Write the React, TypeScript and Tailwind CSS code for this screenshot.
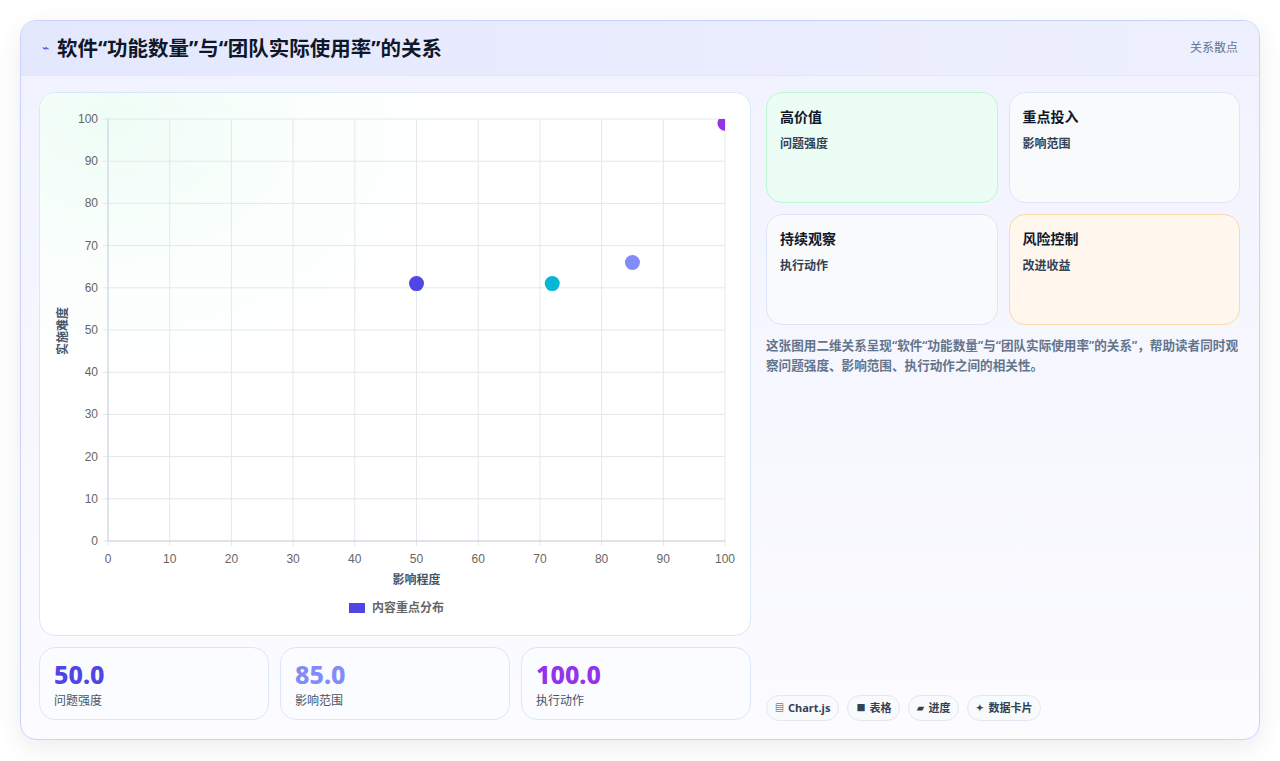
import React from "react";

const F = { fontFamily: '"Noto Sans","Noto Sans CJK SC",sans-serif' };

function Chart() {
  const x0 = 68, x1 = 685, y0 = 26, y1 = 448;
  const xs = (v: number) => x0 + ((x1 - x0) * v) / 100;
  const ys = (v: number) => y1 - ((y1 - y0) * v) / 100;
  const ticks = [0, 10, 20, 30, 40, 50, 60, 70, 80, 90, 100];
  const pts = [
    { x: 50, y: 61, c: "#4f46e5" },
    { x: 72, y: 61, c: "#06b6d4" },
    { x: 85, y: 66, c: "#818cf8" },
    { x: 100, y: 99, c: "#9333ea" },
  ];
  return (
    <svg width="710" height="542" className="block" style={{ fontFamily: '"Liberation Sans","Noto Sans CJK SC",sans-serif' }}>
      <defs>
        <radialGradient id="g" cx="0.1" cy="0.05" r="0.6">
          <stop offset="0" stopColor="#ecfdf5" stopOpacity="0.9" />
          <stop offset="1" stopColor="#ffffff" stopOpacity="0" />
        </radialGradient>
        <clipPath id="c">
          <rect x={x0} y={y0} width={x1 - x0} height={y1 - y0} />
        </clipPath>
      </defs>
      <rect width="710" height="542" fill="url(#g)" />
      {ticks.map((t) => (
        <g key={t}>
          <line x1={xs(t)} x2={xs(t)} y1={y0} y2={y1 + 5} stroke="#e5e7eb" />
          <line x1={x0 - 5} x2={x1} y1={ys(t)} y2={ys(t)} stroke="#e5e7eb" />
          <text x={x0 - 10} y={ys(t) + 4} fontSize="12" fill="#666" textAnchor="end">{t}</text>
          <text x={xs(t)} y={470} fontSize="12" fill="#666" textAnchor="middle">{t}</text>
        </g>
      ))}
      <line x1={x0} x2={x0} y1={y0} y2={y1} stroke="#cbd5e1" />
      <line x1={x0} x2={x1} y1={y1} y2={y1} stroke="#cbd5e1" />
      <text x={(x0 + x1) / 2} y={491} fontSize="12" fontWeight="700" fill="#475569" textAnchor="middle">影响程度</text>
      <text transform="translate(27,238) rotate(-90)" fontSize="12" fontWeight="700" fill="#475569" textAnchor="middle">实施难度</text>
      <rect x="309" y="510" width="16" height="10" fill="#4f46e5" />
      <text x="332" y="519" fontSize="12" fontWeight="700" fill="#666">内容重点分布</text>
      <g clipPath="url(#c)">
        {pts.map((p, i) => (
          <circle key={i} cx={xs(p.x)} cy={ys(p.y)} r="7.5" fill={p.c} />
        ))}
      </g>
    </svg>
  );
}

function Quad({ t, s, cls }: { t: string; s: string; cls: string }) {
  return (
    <div className={`rounded-2xl border h-[111px] px-[13px] py-[14px] ${cls}`}>
      <div className="text-[14px] font-bold text-[#0f172a] leading-5">{t}</div>
      <div className="text-[12px] font-semibold text-[#334155] mt-[8px]">{s}</div>
    </div>
  );
}

function Stat({ v, l, c }: { v: string; l: string; c: string }) {
  return (
    <div className="flex-1 rounded-2xl border border-[#dbe6fb] bg-[#fafcff] px-[14px] pt-[10px] h-[73px]">
      <div className={`text-[25px] font-extrabold leading-8 ${c}`}>{v}</div>
      <div className="text-[12px] text-[#475569] mt-[2px]">{l}</div>
    </div>
  );
}

function Chip({ icon, t }: { icon: string; t: string }) {
  return (
    <div className="h-[26px] px-[8px] rounded-full border border-[#e2e8f0] bg-[#f8fafc] flex items-center gap-1 text-[11px] font-bold text-[#334155]">
      <span className="text-[9px]">{icon}</span>{t}
    </div>
  );
}

export default function App() {
  return (
    <div className="w-[1280px] h-[761px] bg-white p-[20px] pb-[21px]" style={F}>
      <div className="h-full rounded-2xl border border-[#c7d2fe] overflow-hidden flex flex-col shadow-[0_8px_24px_rgba(15,23,42,0.08)] bg-gradient-to-b from-[#f0f2fe] to-[#fcfcff]">
        <div className="h-[55px] shrink-0 bg-gradient-to-r from-[#e4e8fd] to-[#eef0fe] border-b border-[#e0e7ff] flex items-center justify-between px-[21px]">
          <div className="flex items-center gap-[8px]">
            <span className="text-[#4f46e5] text-[12px]">⌁</span>
            <span className="text-[20.5px] font-bold text-[#0f172a]">软件“功能数量”与“团队实际使用率”的关系</span>
          </div>
          <span className="text-[12px] text-[#64748b]">关系散点</span>
        </div>
        <div className="flex-1 flex gap-[15px] pl-[18px] pr-[19px] pt-[16px] pb-[18px]">
          <div className="w-[712px] flex flex-col gap-[11px]">
            <div className="h-[544px] rounded-2xl border border-[#dbe6fb] bg-white overflow-hidden">
              <Chart />
            </div>
            <div className="flex gap-[11px]">
              <Stat v="50.0" l="问题强度" c="text-[#4f46e5]" />
              <Stat v="85.0" l="影响范围" c="text-[#818cf8]" />
              <Stat v="100.0" l="执行动作" c="text-[#9333ea]" />
            </div>
          </div>
          <div className="flex-1 flex flex-col">
            <div className="grid grid-cols-2 gap-[11px]">
              <Quad t="高价值" s="问题强度" cls="border-[#bbf7d0] bg-[#ecfdf5]" />
              <Quad t="重点投入" s="影响范围" cls="border-[#dbe6fb] bg-[#f8fafc]" />
              <Quad t="持续观察" s="执行动作" cls="border-[#dbe6fb] bg-[#f8fafc]" />
              <Quad t="风险控制" s="改进收益" cls="border-[#fed7aa] bg-[#fff7ed]" />
            </div>
            <p className="mt-[11px] text-[12.6px] font-semibold leading-[20px] text-[#64748b]">
              这张图用二维关系呈现“软件“功能数量”与“团队实际使用率”的关系”，帮助读者同时观察问题强度、影响范围、执行动作之间的相关性。
            </p>
            <div className="mt-auto flex gap-[8px]">
              <Chip icon="▤" t="Chart.js" />
              <Chip icon="■" t="表格" />
              <Chip icon="▰" t="进度" />
              <Chip icon="✦" t="数据卡片" />
            </div>
          </div>
        </div>
      </div>
    </div>
  );
}
